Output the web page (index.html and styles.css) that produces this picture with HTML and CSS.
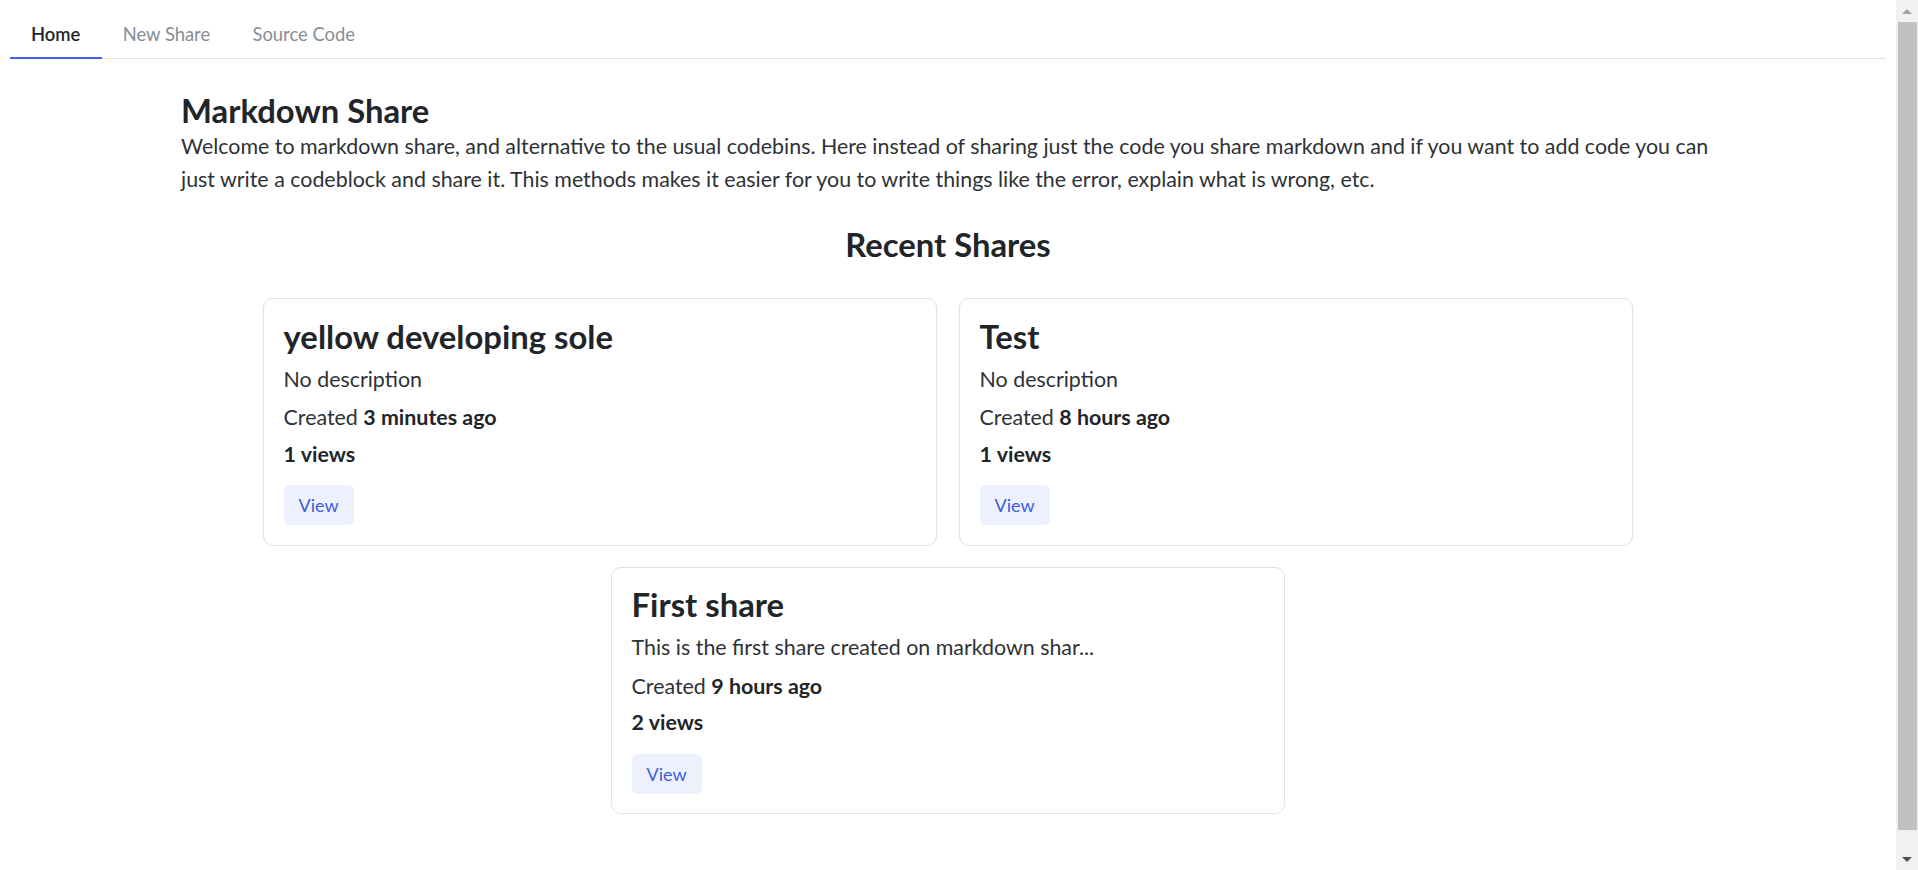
FILE: index.html
```html
<!DOCTYPE html>
<html lang="en">
<head>
<meta charset="utf-8">
<title>Markdown Share</title>
<link rel="stylesheet" href="styles.css">
</head>
<body>
<div class="app">
  <div class="page">
    <nav class="tabs">
      <a class="tab active">Home</a>
      <a class="tab">New Share</a>
      <a class="tab">Source Code</a>
    </nav>
    <main class="container">
      <h2 class="title">Markdown Share</h2>
      <p class="intro">Welcome to markdown share, and alternative to the usual codebins. Here instead of sharing just the code you share markdown and if you want to add code you can just write a codeblock and share it. This methods makes it easier for you to write things like the error, explain what is wrong, etc.</p>
      <h2 class="title center">Recent Shares</h2>
      <section class="cards">
        <article class="card">
          <h3 class="card-title">yellow developing sole</h3>
          <p class="card-desc">No description</p>
          <p class="card-created">Created <b>3 minutes ago</b></p>
          <p class="card-views"><b>1 views</b></p>
          <button class="view-btn">View</button>
        </article>
        <article class="card">
          <h3 class="card-title">Test</h3>
          <p class="card-desc">No description</p>
          <p class="card-created">Created <b>8 hours ago</b></p>
          <p class="card-views"><b>1 views</b></p>
          <button class="view-btn">View</button>
        </article>
        <article class="card">
          <h3 class="card-title">First share</h3>
          <p class="card-desc">This is the first share created on markdown shar...</p>
          <p class="card-created">Created <b>9 hours ago</b></p>
          <p class="card-views"><b>2 views</b></p>
          <button class="view-btn">View</button>
        </article>
      </section>
    </main>
  </div>
  <div class="scrollbar">
    <div class="sb-btn"><span class="arrow-up"></span></div>
    <div class="sb-track"><div class="sb-thumb"></div></div>
    <div class="sb-btn"><span class="arrow-down"></span></div>
  </div>
</div>
</body>
</html>
```
FILE: styles.css
```css
html, body {
  margin: 0;
  padding: 0;
  height: 100%;
  overflow: hidden;
  background: #ffffff;
}
body {
  font-family: "Lato", "Open Sans", sans-serif;
  color: #2e3236;
}
.app {
  display: flex;
  height: 100vh;
}
.page {
  flex: 1;
  padding: 9.8px;
  overflow: hidden;
}
.tabs {
  display: flex;
  border-bottom: 1.2px solid #dee2e6;
}
.tab {
  display: flex;
  align-items: center;
  height: 48.9px;
  padding: 1px 21.2px 0;
  box-sizing: border-box;
  font-size: 18.4px;
  color: #868e96;
  border-bottom: 2.4px solid transparent;
  margin-bottom: -1.2px;
  cursor: pointer;
}
.tab.active {
  color: #212529;
  font-weight: 600;
  border-bottom-color: #4263eb;
}
.container {
  max-width: 1534px;
  margin: 0 auto;
}
.title {
  margin: 32.5px 0 0;
  font-size: 32.8px;
  line-height: 39px;
  font-weight: 700;
  color: #212529;
}
.title.center {
  text-align: center;
  margin-top: 28.8px;
}
.intro {
  margin: 0;
  font-size: 21.4px;
  line-height: 33px;
}
.cards {
  margin-top: 34.5px;
  display: flex;
  flex-wrap: wrap;
  justify-content: center;
  gap: 21px 22px;
}
.card {
  box-sizing: border-box;
  width: 674px;
  border: 1.2px solid #dee2e6;
  border-radius: 9.8px;
  padding: 19.6px 19.6px 19.5px;
  display: flex;
  flex-direction: column;
  align-items: flex-start;
}
.card-title {
  margin: 0;
  font-size: 32.8px;
  line-height: 35px;
  font-weight: 700;
  color: #212529;
}
.card p {
  margin: 0;
  font-size: 21.4px;
  line-height: 33px;
}
.card b {
  font-weight: 700;
  color: #212529;
}
.card-desc { margin-top: 9px !important; }
.card-created { margin-top: 5.3px !important; }
.card-views { margin-top: 3.7px !important; }
.view-btn {
  margin-top: 14.3px;
  height: 40px;
  padding: 0 15px;
  border: none;
  border-radius: 6px;
  background: #edf1fe;
  color: #3c5fd9;
  font-family: inherit;
  font-size: 18px;
  cursor: pointer;
}
.scrollbar {
  width: 22px;
  background: #f1f1f1;
  display: flex;
  flex-direction: column;
}
.sb-btn {
  height: 22px;
  display: flex;
  align-items: center;
  justify-content: center;
}
.arrow-up {
  width: 0;
  height: 0;
  border-left: 5px solid transparent;
  border-right: 5px solid transparent;
  border-bottom: 5px solid #a3a3a3;
}
.arrow-down {
  width: 0;
  height: 0;
  border-left: 5px solid transparent;
  border-right: 5px solid transparent;
  border-top: 5px solid #505050;
}
.sb-track {
  flex: 1;
  padding: 0 1px 18px 2px;
  display: flex;
}
.sb-thumb {
  flex: 1;
  background: #c1c1c1;
}
```
